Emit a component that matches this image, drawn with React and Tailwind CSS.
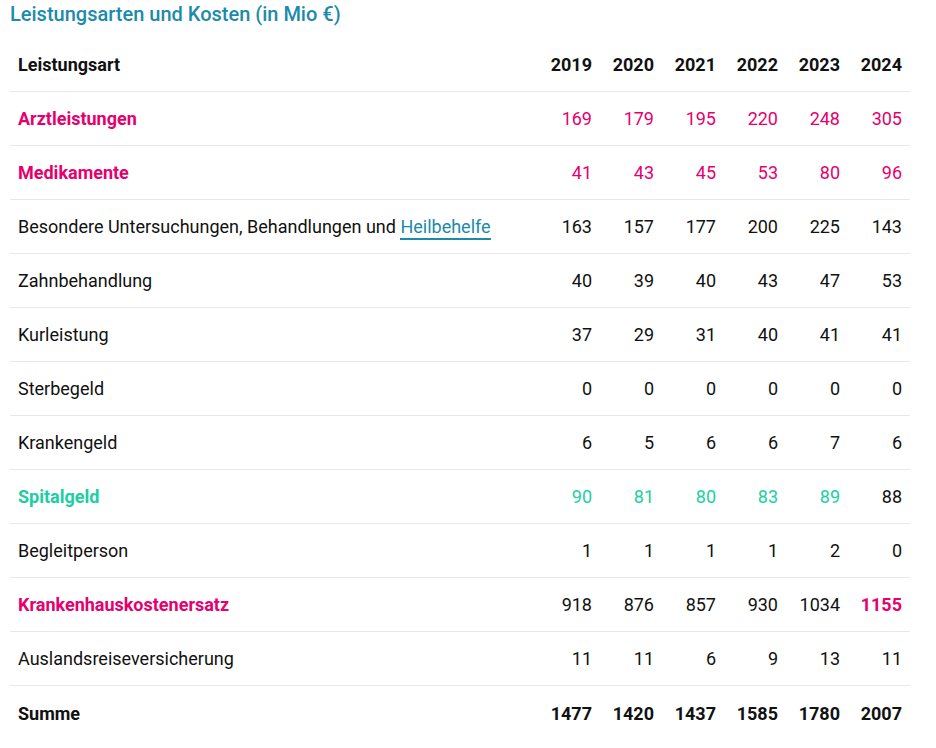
import React from 'react';

const PINK = 'text-[#e5006d]';
const GREEN = 'text-[#1ccfa3]';

const years = [2019, 2020, 2021, 2022, 2023, 2024];

const rows = [
    { name: 'Arztleistungen', values: [169, 179, 195, 220, 248, 305], nameCls: `font-bold ${PINK}`, valCls: [PINK, PINK, PINK, PINK, PINK, PINK] },
    { name: 'Medikamente', values: [41, 43, 45, 53, 80, 96], nameCls: `font-bold ${PINK}`, valCls: [PINK, PINK, PINK, PINK, PINK, PINK] },
    { name: 'Besondere Untersuchungen, Behandlungen und', link: 'Heilbehelfe', values: [163, 157, 177, 200, 225, 143] },
    { name: 'Zahnbehandlung', values: [40, 39, 40, 43, 47, 53] },
    { name: 'Kurleistung', values: [37, 29, 31, 40, 41, 41] },
    { name: 'Sterbegeld', values: [0, 0, 0, 0, 0, 0] },
    { name: 'Krankengeld', values: [6, 5, 6, 6, 7, 6] },
    { name: 'Spitalgeld', values: [90, 81, 80, 83, 89, 88], nameCls: `font-bold ${GREEN}`, valCls: [GREEN, GREEN, GREEN, GREEN, GREEN, ''] },
    { name: 'Begleitperson', values: [1, 1, 1, 1, 2, 0] },
    { name: 'Krankenhauskostenersatz', values: [918, 876, 857, 930, 1034, 1155], nameCls: `font-bold ${PINK}`, valCls: ['', '', '', '', '', `font-bold ${PINK}`] },
    { name: 'Auslandsreiseversicherung', values: [11, 11, 6, 9, 13, 11] },
];

const sums = [1477, 1420, 1437, 1585, 1780, 2007];

export default function App() {
    return (
        <div className="bg-white min-h-screen px-[10px] pt-[1px] font-['Roboto',_'Liberation_Sans',_sans-serif] text-[#111]">
            <h2 className="text-[20px] leading-[26px] font-medium text-[#1c8aaa]">
                Leistungsarten und Kosten (in Mio €)
            </h2>
            <table className="w-[900px] mt-[11px] border-collapse text-[18px]">
                <thead>
                    <tr className="h-[53px] border-b border-[#e8e8e8]">
                        <th className="text-left font-bold pl-[8px]">Leistungsart</th>
                        {years.map((y) => (
                            <th key={y} className="w-[62px] text-right font-bold pr-[8px]">{y}</th>
                        ))}
                    </tr>
                </thead>
                <tbody>
                    {rows.map((r) => (
                        <tr key={r.name} className="h-[54px] border-b border-[#e8e8e8]">
                            <td className={`pl-[8px] text-left ${r.nameCls || ''}`}>
                                {r.name}
                                {r.link && (
                                    <>
                                        {' '}
                                        <a className="text-[#1c8aaa] border-b-2 border-[#1c8aaa] pb-[1px]">{r.link}</a>
                                    </>
                                )}
                            </td>
                            {r.values.map((v, i) => (
                                <td key={i} className={`text-right pr-[8px] ${r.valCls ? r.valCls[i] : ''}`}>{v}</td>
                            ))}
                        </tr>
                    ))}
                    <tr className="h-[56px] font-bold">
                        <td className="pl-[8px] text-left">Summe</td>
                        {sums.map((v, i) => (
                            <td key={i} className="text-right pr-[8px]">{v}</td>
                        ))}
                    </tr>
                </tbody>
            </table>
        </div>
    );
}
